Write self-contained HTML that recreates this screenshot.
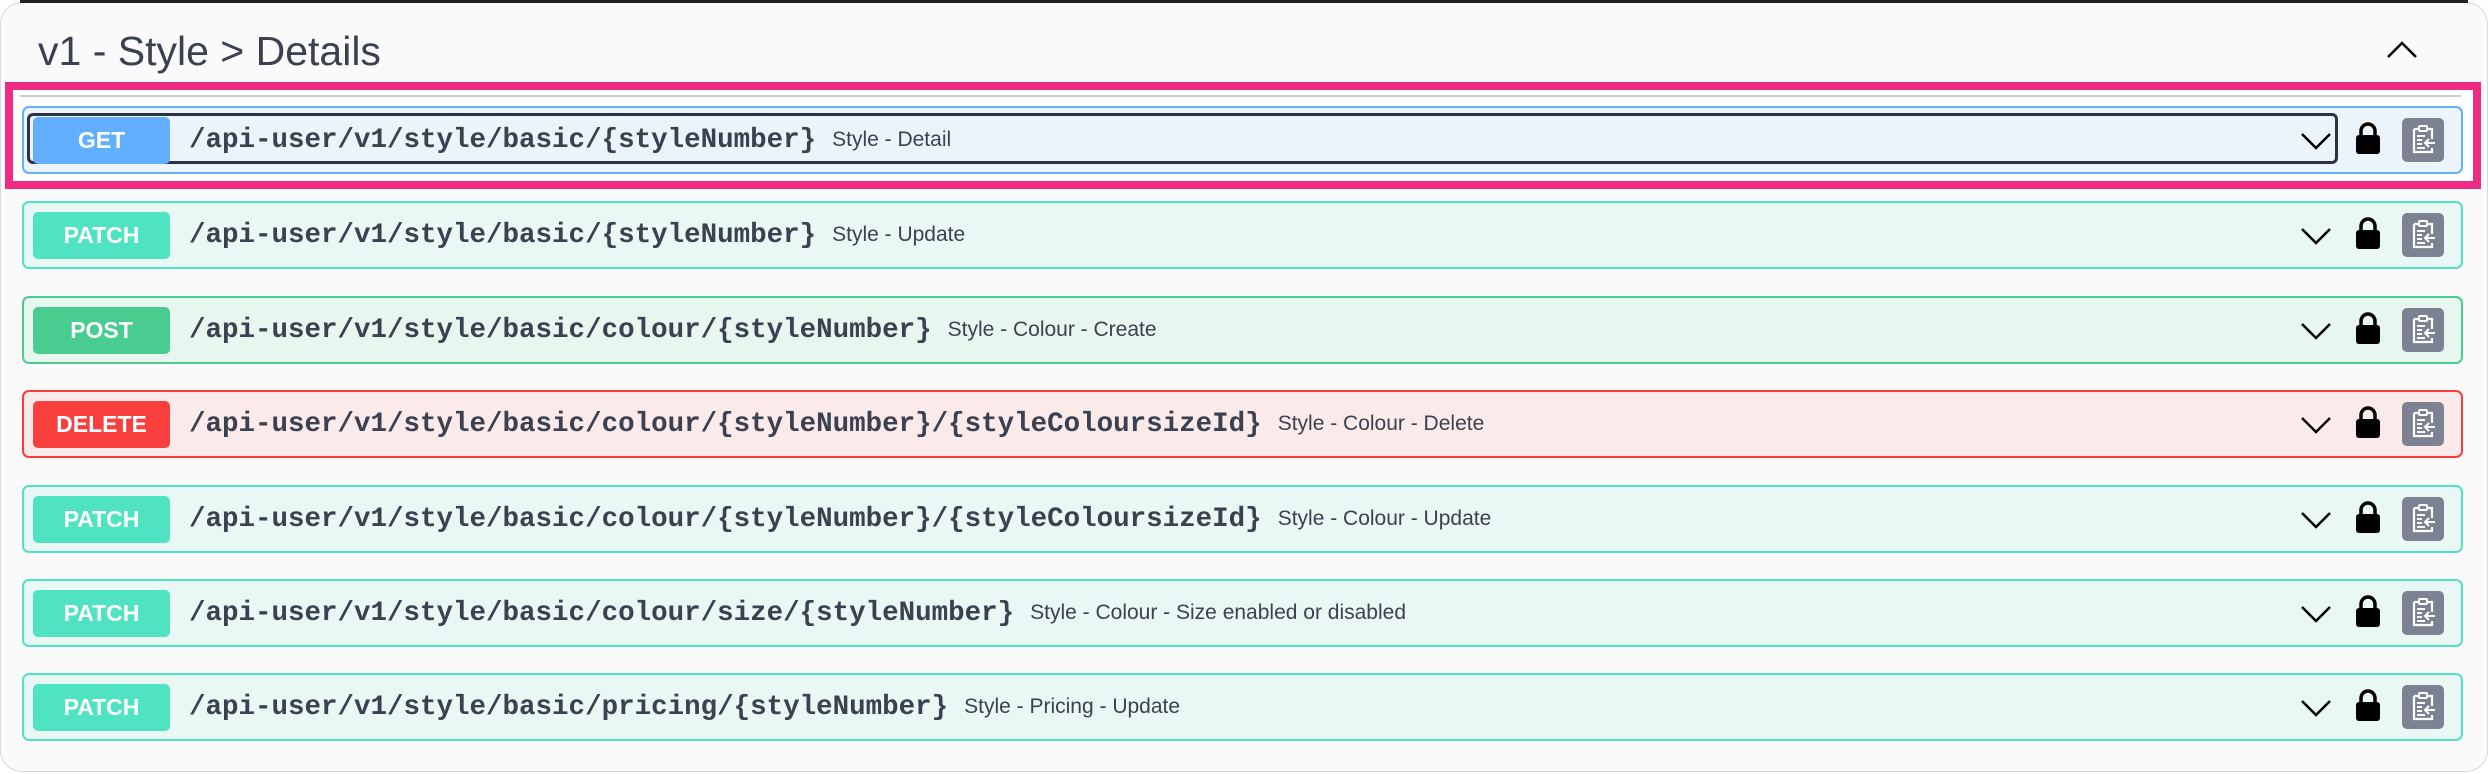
<!DOCTYPE html>
<html><head><meta charset="utf-8"><style>
*{box-sizing:border-box;margin:0;padding:0}
body{width:2488px;height:774px;background:#fff;overflow:hidden;font-family:"Liberation Sans",sans-serif;color:#3b4151;position:relative}
.topline{position:absolute;left:20px;right:20px;top:0;height:3px;background:#222}
.wrap{position:absolute;left:0;top:2px;width:2488px;height:770px;background:#fafafa;border:1px solid #d8d8d8;border-radius:22px}
h1{position:absolute;left:38px;top:28px;font-size:41px;font-weight:400;color:#3b4151}
.up{position:absolute;left:2386px;top:40px}
.pink{position:absolute;left:5px;top:82px;width:2476px;height:107px;border:8px solid #f02b86;background:#fff}
.gline{position:absolute;left:20px;top:95px;width:2441px;height:2px;background:#ccc}
.row{position:absolute;left:22px;width:2441px;height:68px;border:2px solid;border-radius:7px}
.badge{position:absolute;left:9px;top:9px;width:137px;height:47px;border-radius:5px;color:#fff;font-weight:700;font-size:23px;text-align:center;line-height:47px}
.path{position:absolute;left:165px;top:0;line-height:64px;font-family:"Liberation Mono",monospace;font-weight:700;font-size:27.5px;color:#3b4151;white-space:nowrap}
.path span{font-family:"Liberation Sans",sans-serif;font-weight:400;font-size:21px;margin-left:16px;vertical-align:1px}
.chev{position:absolute;left:2276px;top:24px}
.lock{position:absolute;left:2331px;top:14px}
.copy{position:absolute;left:2378px;top:10px;width:42px;height:44px;background:#7d8293;border-radius:5px}
.copy svg{position:absolute;left:8px;top:7px}
.get{background:#ebf3fb;border-color:#61affe}.get .badge{background:#61affe}
.patch{background:#e9f8f4;border-color:#50e3c2}.patch .badge{background:#50e3c2}
.post{background:#e8f6f0;border-color:#49cc90}.post .badge{background:#49cc90}
.del{background:#fbeaea;border-color:#f93e3e}.del .badge{background:#f93e3e}
.focus{position:absolute;left:3px;top:5px;width:2311px;height:51px;border:3px solid #2d3142;border-radius:6px}
</style></head><body>
<div class="wrap"></div>
<div class="topline"></div>
<h1>v1 - Style &gt; Details</h1>
<svg class="up" width="32" height="20" viewBox="0 0 32 20"><path d="M2 17 L16 3 L30 17" fill="none" stroke="#000" stroke-width="2.5"/></svg>
<div class="pink"></div>
<div class="gline"></div>

<div class="row get" style="top:106px"><div class="focus"></div><div class="badge">GET</div><div class="path">/api-user/v1/style/basic/{styleNumber}<span>Style - Detail</span></div>
<svg class="chev" width="32" height="18" viewBox="0 0 32 18"><path d="M2 2 L16 16 L30 2" fill="none" stroke="#000" stroke-width="2.5"/></svg>
<svg class="lock" width="26" height="34" viewBox="0 0 26 34"><path d="M6 14 V9 a7 7 0 0 1 14 0 V14" fill="none" stroke="#000" stroke-width="3.5"/><rect x="1" y="13" width="24" height="19" rx="3" fill="#000"/></svg>
<div class="copy"><svg width="26" height="30" viewBox="0 0 26 30"><path d="M4 4 H8 M18 4 H22 V14 M22 23 V27 H4 V4" fill="none" stroke="#fff" stroke-width="2.2"/><rect x="9" y="1" width="8" height="5" rx="1" fill="none" stroke="#fff" stroke-width="2"/><path d="M7 11 H15 M7 15 H12 M7 19 H12 M7 23 H15 M25 18 H15 M19 14 L15 18 L19 22" fill="none" stroke="#fff" stroke-width="2"/></svg></div></div>

<div class="row patch" style="top:201px"><div class="badge">PATCH</div><div class="path">/api-user/v1/style/basic/{styleNumber}<span>Style - Update</span></div>
<svg class="chev" width="32" height="18" viewBox="0 0 32 18"><path d="M2 2 L16 16 L30 2" fill="none" stroke="#000" stroke-width="2.5"/></svg>
<svg class="lock" width="26" height="34" viewBox="0 0 26 34"><path d="M6 14 V9 a7 7 0 0 1 14 0 V14" fill="none" stroke="#000" stroke-width="3.5"/><rect x="1" y="13" width="24" height="19" rx="3" fill="#000"/></svg>
<div class="copy"><svg width="26" height="30" viewBox="0 0 26 30"><path d="M4 4 H8 M18 4 H22 V14 M22 23 V27 H4 V4" fill="none" stroke="#fff" stroke-width="2.2"/><rect x="9" y="1" width="8" height="5" rx="1" fill="none" stroke="#fff" stroke-width="2"/><path d="M7 11 H15 M7 15 H12 M7 19 H12 M7 23 H15 M25 18 H15 M19 14 L15 18 L19 22" fill="none" stroke="#fff" stroke-width="2"/></svg></div></div>

<div class="row post" style="top:296px"><div class="badge">POST</div><div class="path">/api-user/v1/style/basic/colour/{styleNumber}<span>Style - Colour - Create</span></div>
<svg class="chev" width="32" height="18" viewBox="0 0 32 18"><path d="M2 2 L16 16 L30 2" fill="none" stroke="#000" stroke-width="2.5"/></svg>
<svg class="lock" width="26" height="34" viewBox="0 0 26 34"><path d="M6 14 V9 a7 7 0 0 1 14 0 V14" fill="none" stroke="#000" stroke-width="3.5"/><rect x="1" y="13" width="24" height="19" rx="3" fill="#000"/></svg>
<div class="copy"><svg width="26" height="30" viewBox="0 0 26 30"><path d="M4 4 H8 M18 4 H22 V14 M22 23 V27 H4 V4" fill="none" stroke="#fff" stroke-width="2.2"/><rect x="9" y="1" width="8" height="5" rx="1" fill="none" stroke="#fff" stroke-width="2"/><path d="M7 11 H15 M7 15 H12 M7 19 H12 M7 23 H15 M25 18 H15 M19 14 L15 18 L19 22" fill="none" stroke="#fff" stroke-width="2"/></svg></div></div>

<div class="row del" style="top:390px"><div class="badge">DELETE</div><div class="path">/api-user/v1/style/basic/colour/{styleNumber}/{styleColoursizeId}<span>Style - Colour - Delete</span></div>
<svg class="chev" width="32" height="18" viewBox="0 0 32 18"><path d="M2 2 L16 16 L30 2" fill="none" stroke="#000" stroke-width="2.5"/></svg>
<svg class="lock" width="26" height="34" viewBox="0 0 26 34"><path d="M6 14 V9 a7 7 0 0 1 14 0 V14" fill="none" stroke="#000" stroke-width="3.5"/><rect x="1" y="13" width="24" height="19" rx="3" fill="#000"/></svg>
<div class="copy"><svg width="26" height="30" viewBox="0 0 26 30"><path d="M4 4 H8 M18 4 H22 V14 M22 23 V27 H4 V4" fill="none" stroke="#fff" stroke-width="2.2"/><rect x="9" y="1" width="8" height="5" rx="1" fill="none" stroke="#fff" stroke-width="2"/><path d="M7 11 H15 M7 15 H12 M7 19 H12 M7 23 H15 M25 18 H15 M19 14 L15 18 L19 22" fill="none" stroke="#fff" stroke-width="2"/></svg></div></div>

<div class="row patch" style="top:485px"><div class="badge">PATCH</div><div class="path">/api-user/v1/style/basic/colour/{styleNumber}/{styleColoursizeId}<span>Style - Colour - Update</span></div>
<svg class="chev" width="32" height="18" viewBox="0 0 32 18"><path d="M2 2 L16 16 L30 2" fill="none" stroke="#000" stroke-width="2.5"/></svg>
<svg class="lock" width="26" height="34" viewBox="0 0 26 34"><path d="M6 14 V9 a7 7 0 0 1 14 0 V14" fill="none" stroke="#000" stroke-width="3.5"/><rect x="1" y="13" width="24" height="19" rx="3" fill="#000"/></svg>
<div class="copy"><svg width="26" height="30" viewBox="0 0 26 30"><path d="M4 4 H8 M18 4 H22 V14 M22 23 V27 H4 V4" fill="none" stroke="#fff" stroke-width="2.2"/><rect x="9" y="1" width="8" height="5" rx="1" fill="none" stroke="#fff" stroke-width="2"/><path d="M7 11 H15 M7 15 H12 M7 19 H12 M7 23 H15 M25 18 H15 M19 14 L15 18 L19 22" fill="none" stroke="#fff" stroke-width="2"/></svg></div></div>

<div class="row patch" style="top:579px"><div class="badge">PATCH</div><div class="path">/api-user/v1/style/basic/colour/size/{styleNumber}<span>Style - Colour - Size enabled or disabled</span></div>
<svg class="chev" width="32" height="18" viewBox="0 0 32 18"><path d="M2 2 L16 16 L30 2" fill="none" stroke="#000" stroke-width="2.5"/></svg>
<svg class="lock" width="26" height="34" viewBox="0 0 26 34"><path d="M6 14 V9 a7 7 0 0 1 14 0 V14" fill="none" stroke="#000" stroke-width="3.5"/><rect x="1" y="13" width="24" height="19" rx="3" fill="#000"/></svg>
<div class="copy"><svg width="26" height="30" viewBox="0 0 26 30"><path d="M4 4 H8 M18 4 H22 V14 M22 23 V27 H4 V4" fill="none" stroke="#fff" stroke-width="2.2"/><rect x="9" y="1" width="8" height="5" rx="1" fill="none" stroke="#fff" stroke-width="2"/><path d="M7 11 H15 M7 15 H12 M7 19 H12 M7 23 H15 M25 18 H15 M19 14 L15 18 L19 22" fill="none" stroke="#fff" stroke-width="2"/></svg></div></div>

<div class="row patch" style="top:673px"><div class="badge">PATCH</div><div class="path">/api-user/v1/style/basic/pricing/{styleNumber}<span>Style - Pricing - Update</span></div>
<svg class="chev" width="32" height="18" viewBox="0 0 32 18"><path d="M2 2 L16 16 L30 2" fill="none" stroke="#000" stroke-width="2.5"/></svg>
<svg class="lock" width="26" height="34" viewBox="0 0 26 34"><path d="M6 14 V9 a7 7 0 0 1 14 0 V14" fill="none" stroke="#000" stroke-width="3.5"/><rect x="1" y="13" width="24" height="19" rx="3" fill="#000"/></svg>
<div class="copy"><svg width="26" height="30" viewBox="0 0 26 30"><path d="M4 4 H8 M18 4 H22 V14 M22 23 V27 H4 V4" fill="none" stroke="#fff" stroke-width="2.2"/><rect x="9" y="1" width="8" height="5" rx="1" fill="none" stroke="#fff" stroke-width="2"/><path d="M7 11 H15 M7 15 H12 M7 19 H12 M7 23 H15 M25 18 H15 M19 14 L15 18 L19 22" fill="none" stroke="#fff" stroke-width="2"/></svg></div></div>
</body></html>
